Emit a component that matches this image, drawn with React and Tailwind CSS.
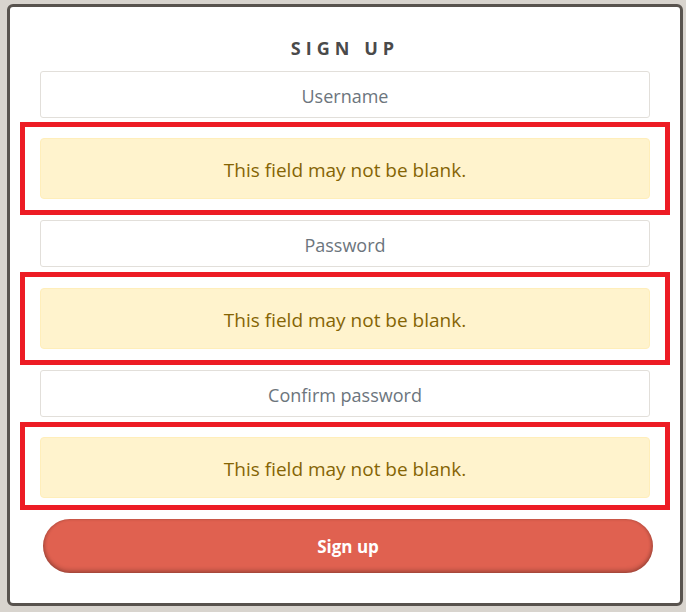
import React from "react";

function Alert({ last = false }) {
  return (
    <div
      className={
        last
          ? "-mx-[20px] border-[5px] border-[#ed1c24] px-[15px] pt-[10px] pb-[7px]"
          : "-mx-[20px] border-[5px] border-[#ed1c24] px-[15px] py-[11px]"
      }
    >
      <div className="flex h-[61px] items-center justify-center rounded-[4px] border border-[#ffeeba] bg-[#fff3cd] pt-[3px] text-[19px] text-[#856404]">
        This field may not be blank.
      </div>
    </div>
  );
}

function Field({ placeholder, type = "text" }) {
  return (
    <input
      type={type}
      placeholder={placeholder}
      className="block h-[47px] w-full rounded-[3px] border border-[#e2dfda] bg-white pt-[2px] text-center text-[18px] text-[#495057] placeholder:text-[#6c757d] outline-none"
    />
  );
}

export default function App() {
  return (
    <div
      className="h-[612px] w-[686px] bg-[#d8d4ce] pl-[7px] pt-[4px]"
      style={{ fontFamily: '"Open Sans", "Noto Sans", sans-serif' }}
    >
      <div className="flex h-[602px] w-[676px] flex-col rounded-[6px] border-[3px] border-[#58534e] bg-white px-[30px] pt-[30px]">
        <h1 className="mb-[12px] text-center text-[18px] font-bold leading-[22px] tracking-[0.28em] text-[#4a4a4a]">
          SIGN UP
        </h1>
        <Field placeholder="Username" />
        <div className="mt-[4px]">
          <Alert />
        </div>
        <div className="mt-[5px]">
          <Field placeholder="Password" type="password" />
        </div>
        <div className="mt-[5px]">
          <Alert />
        </div>
        <div className="mt-[5px]">
          <Field placeholder="Confirm password" type="password" />
        </div>
        <div className="mt-[5px]">
          <Alert last />
        </div>
        <button className="ml-[3px] -mr-[3px] mt-[9px] h-[54px] rounded-full bg-[#e06150] pt-[1px] text-[17px] font-bold text-white shadow-[inset_0_-3px_4px_rgba(0,0,0,0.2),inset_2px_0_3px_rgba(0,0,0,0.12),inset_-2px_0_3px_rgba(0,0,0,0.12)]">
          Sign up
        </button>
      </div>
    </div>
  );
}
